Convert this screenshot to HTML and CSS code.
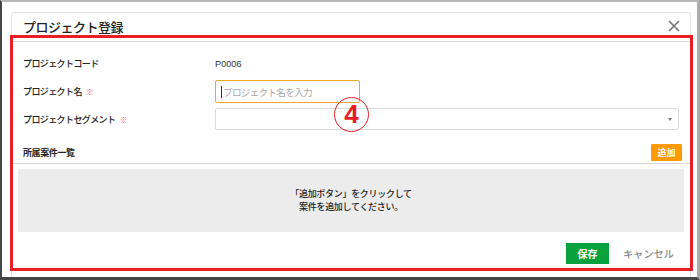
FILE: index.html
```html
<!DOCTYPE html>
<html lang="ja">
<head>
<meta charset="utf-8">
<title>プロジェクト登録</title>
<link rel="stylesheet" href="styles.css">
</head>
<body>
<div class="frame">
  <div class="modal">
    <div class="modal-header">
      <div class="modal-title">プロジェクト登録</div>
      <svg class="close" width="12" height="12" viewBox="0 0 12 12"><path d="M1 1L11 11M11 1L1 11" stroke="#777" stroke-width="1.7" fill="none"/></svg>
    </div>
    <div class="redbox">
      <div class="panel">
        <div class="form">
          <div class="label">プロジェクトコード</div>
          <div class="value code">P0006</div>
          <div class="label">プロジェクト名<span class="req">※</span></div>
          <div class="value"><div class="input"><span class="caret"></span><span class="placeholder">プロジェクト名を入力</span></div></div>
          <div class="label">プロジェクトセグメント<span class="req">※</span></div>
          <div class="value"><div class="select"><span class="arrow"></span></div></div>
        </div>
        <div class="section-head">
          <div class="section-title">所属案件一覧</div>
          <div class="btn-add">追加</div>
        </div>
        <div class="empty">
          <div>「追加ボタン」をクリックして</div>
          <div>案件を追加してください。</div>
        </div>
        <div class="footer">
          <div class="btn-save">保存</div>
          <div class="btn-cancel">キャンセル</div>
        </div>
      </div>
      <div class="marker">4</div>
    </div>
  </div>
</div>
</body>
</html>
```

FILE: styles.css
```css
html, body {
  margin: 0;
  padding: 0;
  background: #fff;
}
body {
  font-family: "Noto Sans CJK JP", "Noto Sans", sans-serif;
  color: #222;
}
.frame {
  width: 700px;
  height: 280px;
  box-sizing: border-box;
  border-left: 2px solid #464646;
  border-top: 2px solid #b8b8b8;
  border-right: 3px solid #ababab;
  border-bottom: 3px solid #464646;
  padding: 10px 0 0 9px;
  overflow: hidden;
  background: #fff;
}
.modal {
  width: 680px;
  height: 266px;
  box-sizing: border-box;
  border: 1px solid #e3e3e3;
  border-bottom: none;
  border-radius: 3px 3px 0 0;
}
.modal-header {
  height: 22px;
  box-sizing: border-box;
  padding: 4px 10px 0 11px;
  display: flex;
  align-items: center;
  justify-content: space-between;
}
.modal-title {
  font-size: 13px;
  font-weight: 500;
  letter-spacing: -0.5px;
  color: #222;
  line-height: 1;
}
.close {
  display: block;
}
.redbox {
  position: relative;
  margin-left: -2px;
  width: 683px;
  height: 236px;
  box-sizing: border-box;
  border: 3px solid #e81d25;
}
.panel {
  margin-top: 3px;
  border-top: 1px solid #dcdcdc;
}
.form {
  display: grid;
  grid-template-columns: 192px 1fr;
  grid-auto-rows: 23px;
  row-gap: 5px;
  padding: 10px 11px 0 10px;
  align-items: center;
}
.label {
  font-size: 9px;
  font-weight: 500;
  letter-spacing: -0.6px;
  color: #222;
  white-space: nowrap;
}
.req {
  color: #f0566a;
  font-size: 8px;
  margin-left: 4px;
}
.value {
  font-size: 9px;
}
.code {
  font-family: "Liberation Sans", Arial, sans-serif;
  font-size: 9.2px;
  color: #333;
}
.input {
  width: 145px;
  height: 23px;
  box-sizing: border-box;
  border: 1px solid #f5a623;
  border-radius: 2px;
  display: flex;
  align-items: center;
  padding-left: 5px;
}
.caret {
  width: 1px;
  height: 12px;
  background: #333;
  margin-right: 1px;
}
.placeholder {
  color: #a8a8a8;
  font-size: 9.6px;
  letter-spacing: -0.7px;
}
.select {
  height: 22px;
  box-sizing: border-box;
  border: 1px solid #dadada;
  border-radius: 2px;
  display: flex;
  align-items: center;
  justify-content: flex-end;
  padding-right: 6px;
  margin-top: -1px;
}
.arrow {
  width: 0;
  height: 0;
  border-left: 2.5px solid transparent;
  border-right: 2.5px solid transparent;
  border-top: 3px solid #777;
}
.section-head {
  margin-top: 13px;
  padding: 0 8px 2px 10px;
  border-bottom: 1px solid #d8d8d8;
  display: flex;
  align-items: center;
  justify-content: space-between;
}
.section-title {
  font-size: 9px;
  font-weight: bold;
  letter-spacing: -0.4px;
  color: #222;
}
.btn-add {
  width: 31px;
  height: 17px;
  background: #ff9a00;
  color: #fff;
  font-size: 9px;
  font-weight: bold;
  display: flex;
  align-items: center;
  justify-content: center;
  border-radius: 1px;
}
.empty {
  margin: 5px 6px 0 5px;
  height: 63px;
  background: #ececec;
  display: flex;
  flex-direction: column;
  align-items: center;
  justify-content: center;
  font-size: 9px;
  font-weight: 500;
  line-height: 12.5px;
  letter-spacing: -0.3px;
  color: #222;
}
.footer {
  margin-top: 11px;
  padding-right: 16px;
  display: flex;
  justify-content: flex-end;
  align-items: center;
}
.btn-save {
  width: 43px;
  height: 21px;
  background: #07a13e;
  color: #fff;
  font-size: 10px;
  font-weight: bold;
  display: flex;
  align-items: center;
  justify-content: center;
}
.btn-cancel {
  margin-left: 14px;
  color: #8a8a8a;
  font-size: 10.2px;
  font-weight: 500;
}
.marker {
  position: absolute;
  left: 321px;
  top: 59px;
  width: 35px;
  height: 35px;
  box-sizing: border-box;
  border: 1.5px solid #e81d25;
  border-radius: 50%;
  color: #e81d25;
  font-family: "Liberation Sans", Arial, sans-serif;
  font-weight: bold;
  font-size: 26px;
  line-height: 32px;
  text-align: center;
}
```
